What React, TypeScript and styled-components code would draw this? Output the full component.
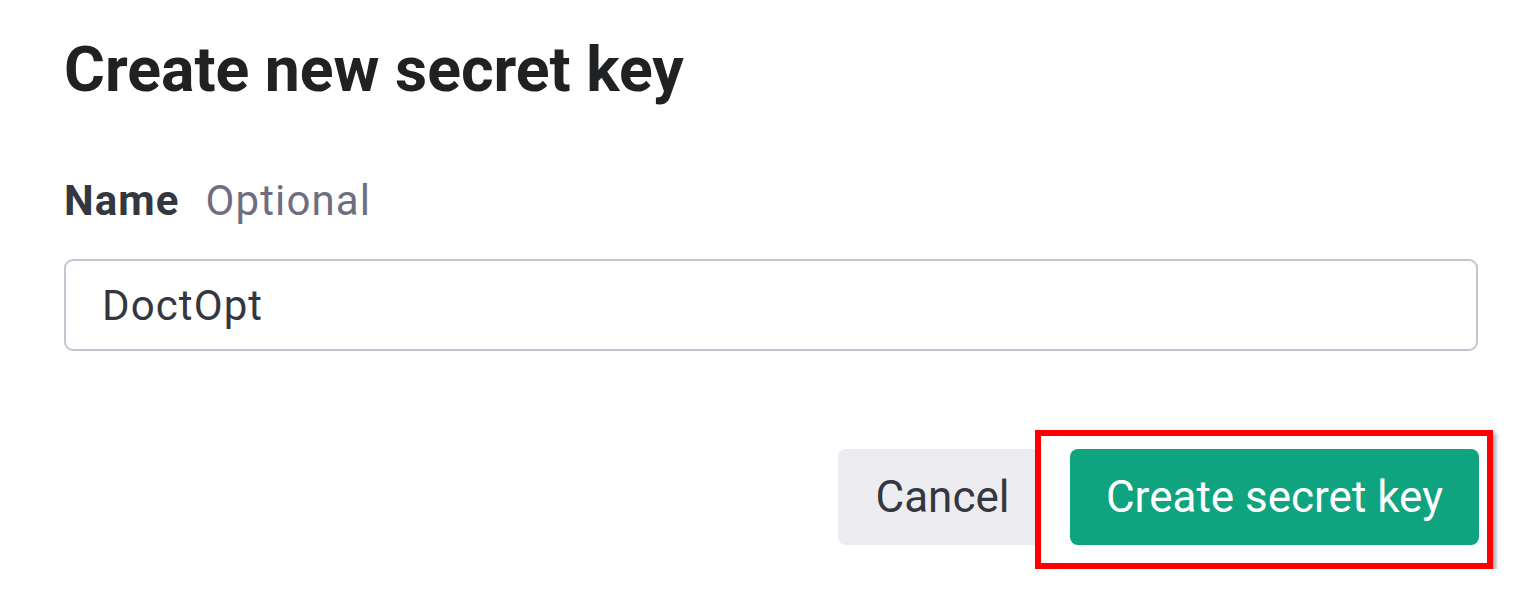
import React from 'react'
import styled, { createGlobalStyle } from 'styled-components'

const GlobalStyle = createGlobalStyle`
    html, body {
        margin: 0;
        padding: 0;
        background: #ffffff;
    }
    body {
        font-family: Roboto, "Liberation Sans", Arial, sans-serif;
        color: #353740;
    }
`

const App: React.FC = () => {
    return (
        <>
            <GlobalStyle />
            <Dialog>
                <Title>Create new secret key</Title>
                <Label>
                    <LabelName>Name</LabelName>
                    <LabelHint>Optional</LabelHint>
                </Label>
                <Input defaultValue="DoctOpt" />
                <Actions>
                    <CancelButton>Cancel</CancelButton>
                    <Highlight>
                        <PrimaryButton>Create secret key</PrimaryButton>
                    </Highlight>
                </Actions>
            </Dialog>
        </>
    )
}

export default App

const Dialog = styled.div`
    display: flex;
    flex-direction: column;
    width: 1414px;
    padding: 32px 0 0 64px;
`

const Title = styled.h1`
    margin: 0;
    font-size: 62.5px;
    line-height: 76px;
    font-weight: 700;
    color: #202123;
`

const Label = styled.div`
    display: flex;
    align-items: baseline;
    gap: 26px;
    margin-top: 68px;
    font-size: 42px;
    line-height: 50px;
    letter-spacing: 1.1px;
`

const LabelName = styled.span`
    font-weight: 700;
    color: #353740;
`

const LabelHint = styled.span`
    font-weight: 400;
    color: #6e6e80;
`

const Input = styled.input`
    box-sizing: border-box;
    margin-top: 33px;
    width: 100%;
    height: 92px;
    padding: 0 36px;
    border: 2.5px solid #c5c5d2;
    border-radius: 9px;
    font-family: Roboto, "Liberation Sans", Arial, sans-serif;
    font-size: 42px;
    letter-spacing: 1.1px;
    color: #353740;
    background: #fff;
    outline: none;
`

const Actions = styled.div`
    display: flex;
    justify-content: flex-end;
    align-items: flex-start;
    margin-top: 79px;
    margin-right: -15px;
`

const CancelButton = styled.button`
    box-sizing: border-box;
    width: 209px;
    height: 96px;
    margin-top: 19px;
    margin-right: -12px;
    padding: 0;
    border: none;
    border-radius: 8px;
    background: #ececf1;
    color: #353740;
    font-family: Roboto, "Liberation Sans", Arial, sans-serif;
    font-size: 44px;
    text-align: center;
`

const Highlight = styled.div`
    position: relative;
    display: flex;
    padding: 13px 8px 18px 29px;
    border: 6px solid #ff0000;
    background: #ffffff;
    box-shadow: 3px 3px 4px rgba(0, 0, 0, 0.35);
`

const PrimaryButton = styled.button`
    box-sizing: border-box;
    width: 409px;
    height: 96px;
    border: none;
    border-radius: 8px;
    background: #10a37f;
    color: #ffffff;
    font-family: Roboto, "Liberation Sans", Arial, sans-serif;
    font-size: 44px;
    text-align: center;
`
